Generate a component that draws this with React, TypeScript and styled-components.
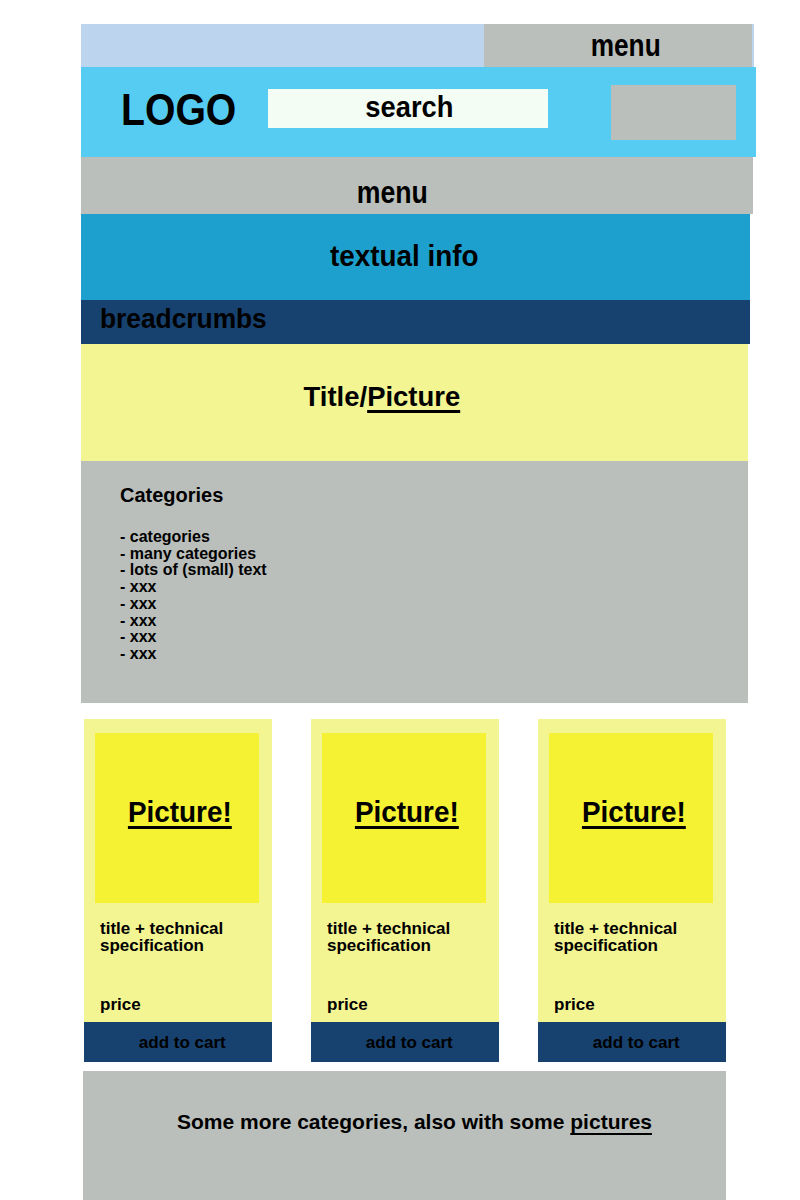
import React from 'react';
import styled, { createGlobalStyle } from 'styled-components';

const GlobalStyle = createGlobalStyle`
  html, body {
    margin: 0;
    padding: 0;
    background: #ffffff;
  }
  body {
    font-family: "Liberation Sans", Arial, sans-serif;
    color: #000000;
  }
`;

// the sketch uses a condensed bold face, so squeeze Liberation Sans a bit
const Narrow = styled.span<{ $size: number; $scale?: number; $origin?: string }>`
  display: inline-block;
  font-weight: 700;
  font-size: ${(p) => p.$size}px;
  line-height: 1;
  white-space: nowrap;
  transform: scaleX(${(p) => p.$scale ?? 1});
  transform-origin: ${(p) => p.$origin ?? 'center'};
`;

const Page = styled.div`
  padding: 24px 0 0 81px;
  display: flex;
  flex-direction: column;
  align-items: flex-start;
  height: 1176px;
  overflow: hidden;
`;

const Band = styled.div<{ $w: number; $h: number; $bg: string }>`
  width: ${(p) => p.$w}px;
  height: ${(p) => p.$h}px;
  background: ${(p) => p.$bg};
  flex-shrink: 0;
  box-sizing: border-box;
`;

const TopBar = styled(Band)`
  display: flex;
  justify-content: flex-end;
`;

const TopMenu = styled.div`
  width: 268px;
  margin-right: 2px;
  background: #bbbfbb;
  display: flex;
  align-items: center;
  justify-content: center;
  padding: 0 0 2px 16px;
  box-sizing: border-box;
`;

const Header = styled(Band)`
  display: flex;
  align-items: flex-start;
  padding-left: 40px;
`;

const Logo = styled.div`
  width: 147px;
  margin-top: 21px;
`;

const Search = styled.div`
  width: 280px;
  height: 39px;
  margin-top: 22px;
  background: #f3fdf4;
  display: flex;
  align-items: center;
  justify-content: center;
  padding: 0 0 3px 2px;
  box-sizing: border-box;
`;

const Cart = styled.div`
  width: 125px;
  height: 55px;
  margin-top: 18px;
  margin-left: 63px;
  background: #bbbfbb;
`;

const CenterBand = styled(Band)<{ $dx?: number; $dy?: number }>`
  display: flex;
  align-items: center;
  justify-content: center;
  padding-left: ${(p) => Math.max(0, (p.$dx ?? 0) * 2)}px;
  padding-right: ${(p) => Math.max(0, -(p.$dx ?? 0) * 2)}px;
  padding-top: ${(p) => Math.max(0, (p.$dy ?? 0) * 2)}px;
  padding-bottom: ${(p) => Math.max(0, -(p.$dy ?? 0) * 2)}px;
`;

const Crumbs = styled(Band)`
  display: flex;
  align-items: center;
  padding: 0 0 7px 19px;
`;

const U = styled.span<{ $t?: number }>`
  text-decoration: underline;
  text-decoration-thickness: ${(p) => p.$t ?? 3}px;
  text-underline-offset: 4px;
`;

const Categories = styled(Band)`
  padding: 22px 0 0 39px;
`;

const CatTitle = styled.div`
  font-size: 20px;
  font-weight: 700;
  line-height: 24px;
  margin-bottom: 22px;
`;

const CatList = styled.ul`
  list-style: none;
  margin: 0;
  padding: 0;
  font-size: 16px;
  font-weight: 700;
  line-height: 16.7px;
`;

const Cards = styled.div`
  display: flex;
  gap: 39.5px;
  margin: 16px 0 0 3px;
`;

const Card = styled.div`
  width: 187.5px;
  height: 343px;
  background: #f2f591;
  display: flex;
  flex-direction: column;
`;

const Picture = styled.div`
  width: 164px;
  height: 170px;
  margin: 14px 0 0 11px;
  background: #f4f232;
  display: flex;
  align-items: center;
  justify-content: center;
  padding: 0 0 12px 6px;
  box-sizing: border-box;
`;

const Spec = styled.div`
  margin: 17px 0 0 16px;
  font-size: 17px;
  font-weight: 700;
  line-height: 17px;
  flex: 1;
`;

const Price = styled.div`
  margin: 0 0 7px 16px;
  font-size: 17px;
  font-weight: 700;
`;

const AddToCart = styled.div`
  height: 40px;
  background: #17426f;
  display: flex;
  align-items: center;
  justify-content: center;
  padding: 2px 0 0 9px;
  box-sizing: border-box;
  font-size: 17px;
  font-weight: 700;
  color: #000000;
`;

const More = styled(Band)`
  margin: 9px 0 0 2px;
  padding: 39px 0 0 20px;
  text-align: center;
  font-weight: 700;
  font-size: 21px;
`;

const categories = [
  'categories',
  'many categories',
  'lots of (small) text',
  'xxx',
  'xxx',
  'xxx',
  'xxx',
  'xxx',
];

export default function App() {
  return (
    <>
      <GlobalStyle />
      <Page>
        <TopBar $w={673} $h={43} $bg="#bdd4ee">
          <TopMenu>
            <Narrow $size={32} $scale={0.82}>menu</Narrow>
          </TopMenu>
        </TopBar>
        <Header $w={675} $h={90} $bg="#56ccf2">
          <Logo>
            <Narrow $size={44} $scale={0.89} $origin="left">
              LOGO
            </Narrow>
          </Logo>
          <Search>
            <Narrow $size={30} $scale={0.91}>search</Narrow>
          </Search>
          <Cart />
        </Header>
        <CenterBand $w={672} $h={57} $bg="#bbbfbb" $dx={-24.5} $dy={7}>
          <Narrow $size={31} $scale={0.86}>menu</Narrow>
        </CenterBand>
        <CenterBand $w={669} $h={86} $bg="#1da0cd" $dx={-11} $dy={-1}>
          <Narrow $size={29} $scale={0.96}>textual info</Narrow>
        </CenterBand>
        <Crumbs $w={669} $h={44} $bg="#17426f">
          <Narrow $size={28} $scale={0.94} $origin="left">
            breadcrumbs
          </Narrow>
        </Crumbs>
        <CenterBand $w={667} $h={117} $bg="#f2f591" $dx={-32.5} $dy={-6}>
          <Narrow $size={28} $scale={0.98}>
            Title/<U>Picture</U>
          </Narrow>
        </CenterBand>
        <Categories $w={667} $h={242} $bg="#bbbfbb">
          <CatTitle>Categories</CatTitle>
          <CatList>
            {categories.map((c, i) => (
              <li key={i}>- {c}</li>
            ))}
          </CatList>
        </Categories>
        <Cards>
          {[0, 1, 2].map((i) => (
            <Card key={i}>
              <Picture>
                <Narrow $size={30} $scale={0.93}>
                  <U>Picture!</U>
                </Narrow>
              </Picture>
              <Spec>
                title + technical
                <br />
                specification
              </Spec>
              <Price>price</Price>
              <AddToCart>add to cart</AddToCart>
            </Card>
          ))}
        </Cards>
        <More $w={643} $h={140} $bg="#bbbfbb">
          Some more categories, also with some <U $t={2}>pictures</U>
        </More>
      </Page>
    </>
  );
}
